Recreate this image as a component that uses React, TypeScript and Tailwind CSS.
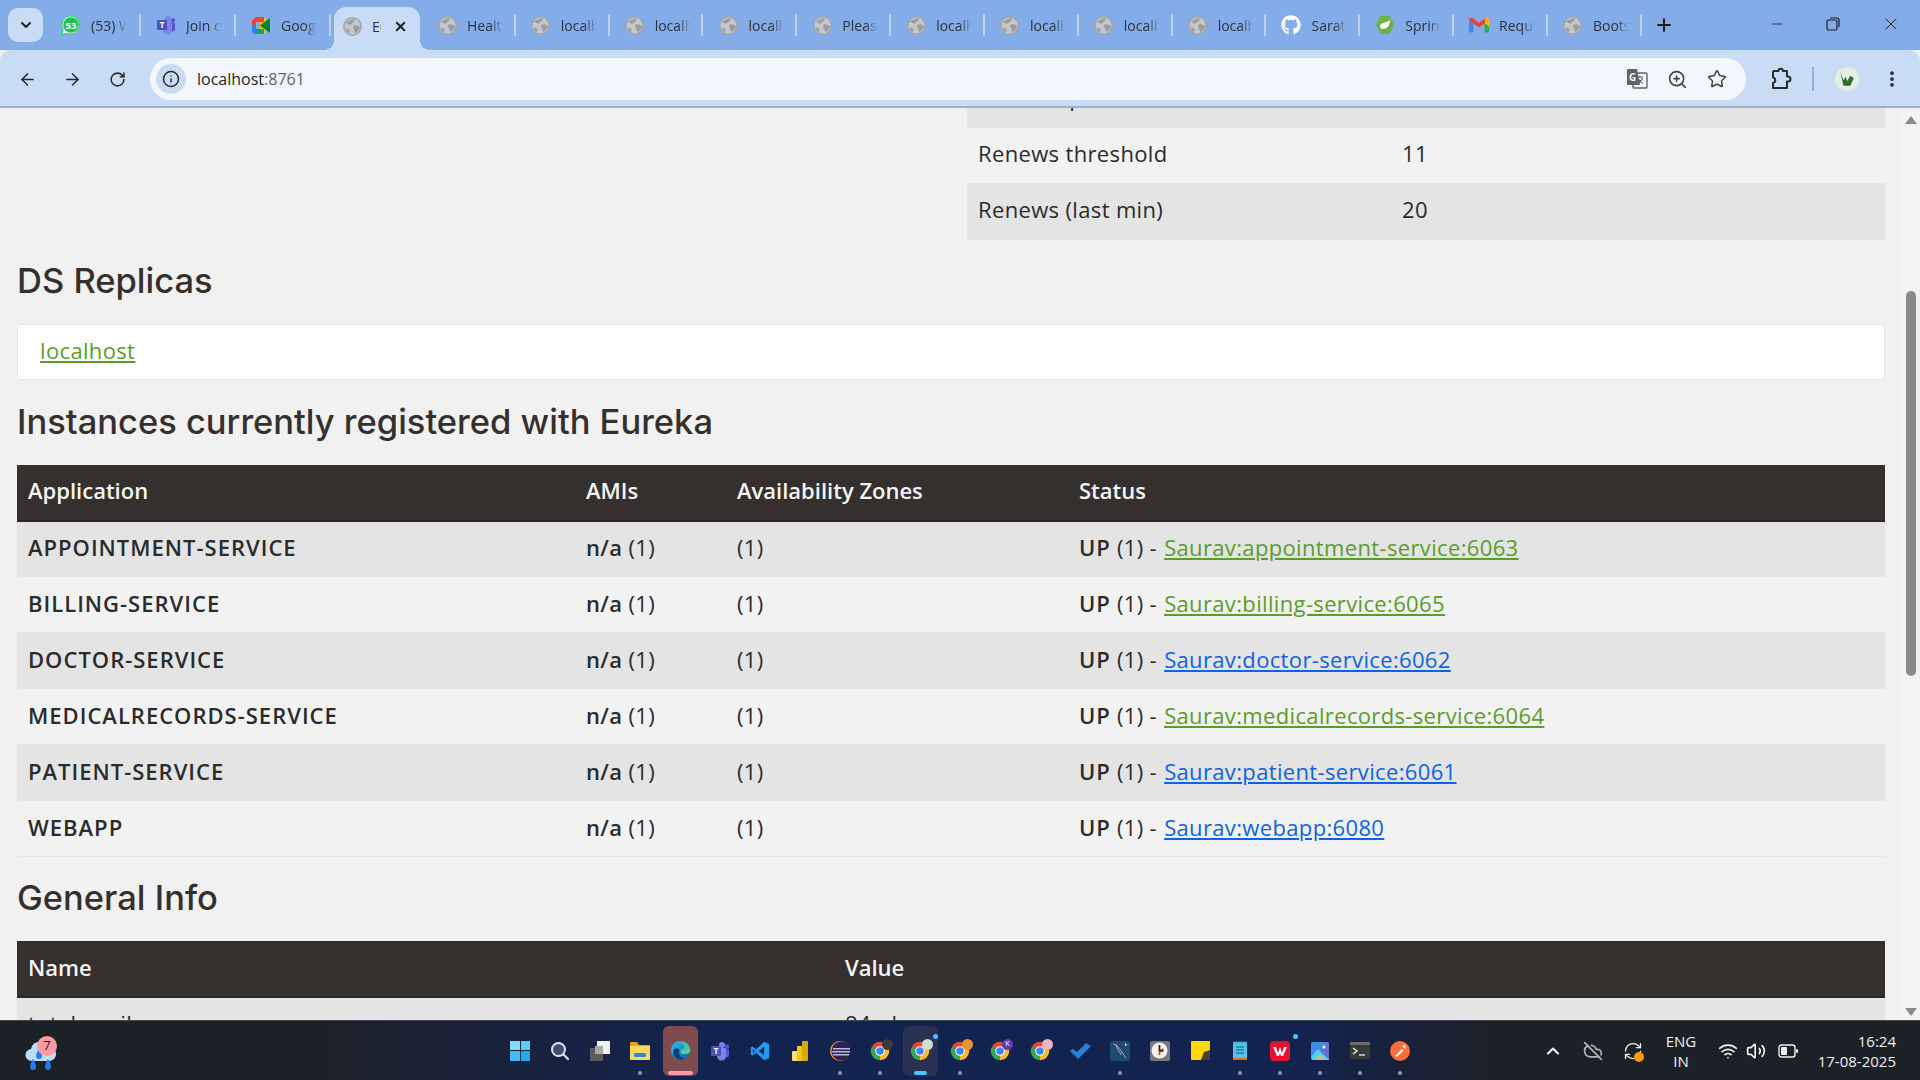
import { ReactNode } from "react"
import {
  ArrowLeft,
  ArrowRight,
  RotateCw,
  Info,
  Star,
  ZoomIn,
  EllipsisVertical,
  Plus,
  X,
  Minus,
  ChevronDown,
  ChevronUp,
  Wifi,
  Volume2,
  RefreshCw,
  CloudOff,
} from "lucide-react"
import { FaGithub } from "react-icons/fa"

function Globe() {
  return (
    <svg width="19" height="19" viewBox="0 0 20 20">
      <circle cx="10" cy="10" r="9.2" fill="#c4c7cb" stroke="#a2a4a8" strokeWidth="1.6" />
      <path d="M3 6c3-2 5-3 9-4 1 2-1 4-3 5-1 2-3 1-6-1zM11 9c3-1 5 0 7 2-1 3-3 5-5 6-1-3-3-5-2-8zM3 12c2 0 4 1 4 3l-1 2c-2-1-3-3-3-5z" fill="#9b9da1" />
    </svg>
  )
}

function WhatsApp() {
  return (
    <svg width="20" height="21" viewBox="0 0 20 21">
      <path d="M10 1a9 9 0 0 0-7.7 13.7L1 19.5l5-1.3A9 9 0 1 0 10 1z" fill="#fff" stroke="#25d366" strokeWidth="1" />
      <circle cx="10" cy="10" r="7.8" fill="#22c05a" />
      <text x="10" y="13.5" textAnchor="middle" fontSize="9.5" fontWeight="700" fill="#fff" fontFamily="Open Sans, sans-serif">53</text>
    </svg>
  )
}

function Teams({ size = 20 }: { size?: number }) {
  return (
    <svg width={size} height={size} viewBox="0 0 20 20">
      <circle cx="12" cy="4" r="3" fill="#7b83eb" />
      <circle cx="17" cy="5.5" r="2.2" fill="#5059c9" />
      <path d="M14 8h5v6a2.5 2.5 0 0 1-5 0z" fill="#5059c9" />
      <path d="M7 7h9v8a4.5 4.5 0 0 1-9 0z" fill="#7b83eb" />
      <rect x="1" y="5" width="10" height="10" rx="1.2" fill="#4b53bc" />
      <text x="6" y="13" textAnchor="middle" fontSize="8" fontWeight="700" fill="#fff" fontFamily="Open Sans, sans-serif">T</text>
    </svg>
  )
}

function Meet() {
  return (
    <svg width="19" height="17" viewBox="0 0 19 17">
      <path d="M4 0h8v5H4v3H0V4z" fill="#ea4335" />
      <path d="M0 8h4v4h8v5H3a3 3 0 0 1-3-3z" fill="#2684fc" />
      <path d="M4 0v8H0V4z" fill="#ea4335" />
      <path d="M12 0a2 2 0 0 1 2 2v13a2 2 0 0 1-2 2V12H8V5h4z" fill="#ffba00" />
      <path d="M8 8.5 14 4l4-3v15l-4-3z" fill="#00832d" />
      <path d="M4 12h8v5H4z" fill="#0ca678" />
    </svg>
  )
}

function Spring() {
  return (
    <svg width="20" height="20" viewBox="0 0 20 20">
      <path d="M5.5 1h9L19 10l-4.5 9h-9L1 10z" fill="#6db33f" />
      <path d="M15 5c0 6-3 9-8 9-1 0-2-1-2-3 1-4 6-3 10-6z" fill="#fff" />
    </svg>
  )
}

function Gmail() {
  return (
    <svg width="20" height="16" viewBox="0 0 20 16">
      <path d="M0 3v11a1.5 1.5 0 0 0 1.5 1.5H4.500V6z" fill="#4285f4" />
      <path d="M20 3v11a1.500 1.500 0 0 1-1.500 1.500H15.500V6z" fill="#34a853" />
      <path d="M15.500 1.500v4.800L20 9V3c0-2-2.200-2.800-3.500-2z" fill="#fbbc04" />
      <path d="M0 3c0-2 2.200-2.800 3.500-2l6.500 5 6-4.700v5L10 10.500 0 3z" fill="#ea4335" />
    </svg>
  )
}

function Translate() {
  return (
    <svg width="22" height="22" viewBox="0 0 22 22">
      <rect x="7" y="5" width="14" height="15" rx="1" fill="#f3f7fd" stroke="#5f6368" strokeWidth="1.400" />
      <path d="M11 9h6M14 8v2M12 15c2-1 4-3 4.500-5M12.500 11c1 2 3 4 4.500 4.500" stroke="#5f6368" strokeWidth="1.100" fill="none" />
      <path d="M2 1h9l3 16H2a1 1 0 0 1-1-1V2a1 1 0 0 1 1-1z" fill="#5f6368" />
      <text x="6.500" y="12.500" textAnchor="middle" fontSize="10" fontWeight="700" fill="#f3f7fd" fontFamily="Open Sans, sans-serif">G</text>
    </svg>
  )
}

function Extension() {
  return (
    <svg className="ml-[24px]" width="22" height="24" viewBox="0 0 22 24" fill="none" stroke="#2b2b2b" strokeWidth="2" strokeLinejoin="round">
      <path d="M4 4h4.500a2.200 2.200 0 0 1 4.400 0H17v5.500h1a2.500 2.500 0 0 1 0 5h-1V21H3v-5a2.800 2.800 0 0 0 0-5.500V5a1 1 0 0 1 1-1z" />
    </svg>
  )
}

function Chrome({ badge }: { badge?: ReactNode }) {
  return (
    <div className="relative h-5 w-5">
      <svg width="20" height="20" viewBox="0 0 24 24">
        <path d="M12 12 2.470 6.500A11 11 0 0 1 21.530 6.500z" fill="#e8453c" />
        <path d="M12 12 21.530 6.500A11 11 0 0 1 12 23z" fill="#f9bb2d" />
        <path d="M12 12V23A11 11 0 0 1 2.470 6.500z" fill="#34a853" />
        <circle cx="12" cy="12" r="5.800" fill="#fff" />
        <circle cx="12" cy="12" r="4.500" fill="#4285f4" />
      </svg>
      {badge}
    </div>
  )
}

function Badge({ className, children }: { className: string; children?: ReactNode }) {
  return (
    <span className={`absolute -top-[2px] -right-[3px] flex h-[11px] w-[11px] items-center justify-center rounded-full text-[7px] text-white ${className}`}>
      {children}
    </span>
  )
}

function Edge() {
  return (
    <svg width="21" height="21" viewBox="0 0 24 24">
      <defs>
        <linearGradient id="edgeA" x1="0" y1="0" x2="1" y2="1">
          <stop offset="0" stopColor="#35c1f1" />
          <stop offset="1" stopColor="#0c59a4" />
        </linearGradient>
        <linearGradient id="edgeB" x1="0" y1="0" x2="1" y2="1">
          <stop offset="0" stopColor="#1b9de2" />
          <stop offset="1" stopColor="#5ee07c" />
        </linearGradient>
      </defs>
      <circle cx="12" cy="12" r="11" fill="url(#edgeA)" />
      <path d="M3 6c4-7 17-7 20 4 1 4-2 6-6 6-3 0-5-1-5-3 0-3 5-2 4-6-1-3-9-5-13-1z" fill="url(#edgeB)" />
      <path d="M11 12c-2 4 1 9 6 9-7 4-15-2-13-9 1-3 5-4 7 0z" fill="#0a3f78" />
    </svg>
  )
}

function VsCode() {
  return (
    <svg width="20" height="20" viewBox="0 0 24 24">
      <path d="M17 1 7.500 10 3 6.500 1 7.500v9L3 17.500 7.500 14 17 23l6-2.500v-17z" fill="#1f9cf0" />
      <path d="M17 7 10.500 12 17 17z" fill="#0e1e4b" />
      <path d="M3.500 9.500 6 12l-2.500 2.500z" fill="#0e1e4b" />
    </svg>
  )
}

function PowerBi() {
  return (
    <svg width="16" height="20" viewBox="0 0 16 20">
      <rect x="0" y="10" width="6" height="10" rx="1" fill="#f2e07a" />
      <rect x="5" y="5" width="6" height="15" rx="1" fill="#f2c811" />
      <rect x="10" y="0" width="6" height="20" rx="1" fill="#d9a80f" />
    </svg>
  )
}

function Eclipse() {
  return (
    <svg width="20" height="20" viewBox="0 0 20 20">
      <circle cx="10" cy="10" r="10" fill="#f7941e" />
      <circle cx="11" cy="10" r="9.500" fill="#2c2255" />
      <rect x="3" y="7" width="17" height="1.500" fill="#bdb8e0" />
      <rect x="2" y="10" width="18" height="1.500" fill="#bdb8e0" />
      <rect x="3" y="13" width="16" height="1.500" fill="#bdb8e0" />
    </svg>
  )
}

function Check() {
  return (
    <svg width="21" height="16" viewBox="0 0 21 16">
      <path d="M0 8l3-2 4 3 9-9 5 3L8 16z" fill="#2a7fd8" />
    </svg>
  )
}

function Workbench() {
  return (
    <svg width="20" height="20" viewBox="0 0 20 20">
      <rect width="20" height="20" rx="2" fill="#1f4a6d" />
      <path d="M3 3c5 1 8 7 13 14M6 3c0 5 4 7 5 11" stroke="#9fb8cc" strokeWidth="1" fill="none" />
      <path d="M15 2l2 2-2 1z" fill="#fff" />
    </svg>
  )
}

function Clock() {
  return (
    <svg width="20" height="20" viewBox="0 0 20 20">
      <rect width="20" height="20" rx="2" fill="#77797d" />
      <circle cx="9.500" cy="9.500" r="8" fill="#f2f2f2" />
      <path d="M9.500 10V5M9.500 10l4-2M9.500 10v4" stroke="#d83b01" strokeWidth="1.600" />
      <path d="M9.500 10V4M9.500 10l4 0" stroke="#222" strokeWidth="1.400" />
    </svg>
  )
}

function Sticky() {
  return (
    <svg width="19" height="19" viewBox="0 0 19 19">
      <path d="M0 1a1 1 0 0 1 1-1h17a1 1 0 0 1 1 1v9l-9 9H1a1 1 0 0 1-1-1z" fill="#ffd800" />
      <path d="M19 9v9a1 1 0 0 1-1 1h-8l3-8z" fill="#4a4130" />
    </svg>
  )
}

function Notepad() {
  return (
    <svg width="14" height="19" viewBox="0 0 14 19">
      <rect y="1" width="14" height="18" rx="1" fill="#4fc3e8" />
      <rect y="17" width="14" height="2" fill="#e2711d" />
      <path d="M3 6h8M3 9h8M3 12h8" stroke="#0d5c7d" strokeWidth="1" />
      <path d="M1 0v2M3.500 0v2M6 0v2M8.500 0v2M11 0v2M13 0v2" stroke="#2a94b8" strokeWidth="1" />
    </svg>
  )
}

function Wps() {
  return (
    <svg width="20" height="20" viewBox="0 0 20 20">
      <rect width="20" height="20" rx="4" fill="#e8102a" />
      <path d="M3 6h3l2 6 2-6 2 6 2-6h3l-4 9h-2l-1-3-1 3H7z" fill="#fff" />
    </svg>
  )
}

function Photos() {
  return (
    <svg width="18" height="18" viewBox="0 0 18 18">
      <defs>
        <linearGradient id="photosBg" x1="0" y1="0" x2="1" y2="1">
          <stop offset="0" stopColor="#2f9bf0" />
          <stop offset="1" stopColor="#7a5fc9" />
        </linearGradient>
      </defs>
      <rect width="18" height="18" rx="2" fill="url(#photosBg)" />
      <circle cx="13" cy="5" r="1.500" fill="#fff" />
      <path d="M0 15l7-8 6 6 5 4v1H1z" fill="#46d6f5" />
      <path d="M4 18l5-6 6 6z" fill="#f5b55e" opacity=".75" />
    </svg>
  )
}

function Terminal() {
  return (
    <svg width="20" height="17" viewBox="0 0 20 17">
      <rect width="20" height="17" rx="1" fill="#3a3a3a" />
      <rect width="20" height="3" fill="#6d6d6d" />
      <path d="M3 6l4 3-4 3" stroke="#eee" strokeWidth="1.300" fill="none" />
      <path d="M9 13h6" stroke="#eee" strokeWidth="1.300" />
    </svg>
  )
}

function Postman() {
  return (
    <svg width="20" height="20" viewBox="0 0 20 20">
      <circle cx="10" cy="10" r="10" fill="#ff6c37" />
      <path d="M5 15l7-7 1.500 1.500-6.500 6.500zM12 5l3 3 1-3-2-1z" fill="#fff" />
    </svg>
  )
}

function Weather() {
  return (
    <div className="relative h-[44px] w-[44px]">
      <svg className="absolute left-[6px] top-[10px]" width="32" height="34" viewBox="0 0 32 34">
        <path d="M7 22a6 6 0 0 1-1-12 9 9 0 0 1 17-2 7 7 0 0 1 2 14z" fill="#bcdcf8" />
        <path d="M8 20c2 3 3 6 3 8a3 3 0 0 1-6 0c0-2 1-5 3-8zM23 20c2 3 3 6 3 8a3 3 0 0 1-6 0c0-2 1-5 3-8zM14 10c2 3 3 5 3 7a3 3 0 0 1-6 0c0-2 1-4 3-7z" fill="#1f7df2" />
      </svg>
      <span className="absolute left-[18px] top-[7px] flex h-[20px] w-[20px] items-center justify-center rounded-full bg-[#ff9aa2] text-[13px] text-[#1b1b1b]">7</span>
    </div>
  )
}

type TabItem = { label: string; icon?: ReactNode; wide?: boolean }

const leftTabs: TabItem[] = [
  { label: "(53) WhatsApp", icon: <WhatsApp />, wide: true },
  { label: "Join conversation", icon: <Teams />, wide: true },
  { label: "Google Meet", icon: <Meet />, wide: true },
]

const rightTabs: TabItem[] = [
  { label: "Health" },
  { label: "localhost" },
  { label: "localhost" },
  { label: "localhost" },
  { label: "Please" },
  { label: "localhost" },
  { label: "localhost" },
  { label: "localhost" },
  { label: "localhost" },
  { label: "Sarath", icon: <FaGithub size={20} className="text-white" /> },
  { label: "Spring", icon: <Spring /> },
  { label: "Request", icon: <Gmail /> },
  { label: "Bootstrap" },
]

function Tab({ label, icon, wide }: TabItem) {
  return (
    <div className={`flex h-full shrink-0 items-center ${wide ? "w-[95px]" : "w-[93.83px]"}`}>
      <div className="flex w-[45px] shrink-0 justify-center pl-[5px]">{icon ?? <Globe />}</div>
      <span className="w-[36px] overflow-hidden whitespace-nowrap text-[14px] text-[#2b3240] [mask-image:linear-gradient(to_right,black_65%,transparent)]">
        {label}
      </span>
      <span className="ml-auto h-[22px] w-[2px] rounded-sm bg-[#c0d3f2]" />
    </div>
  )
}

function ActiveTab() {
  return (
    <div className="relative ml-[3px] mt-[7px] flex h-[43px] w-[86px] shrink-0 items-center rounded-t-[12px] bg-[#c9dcf6] pb-[5px]">
      <span className="absolute bottom-0 -left-[10px] h-[10px] w-[10px] bg-[radial-gradient(circle_at_0_0,transparent_10px,#c9dcf6_10px)]" />
      <span className="absolute bottom-0 -right-[10px] h-[10px] w-[10px] bg-[radial-gradient(circle_at_100%_0,transparent_10px,#c9dcf6_10px)]" />
      <div className="ml-[9px]">
        <Globe />
      </div>
      <span className="ml-[10px] w-[9px] overflow-hidden text-[14px] text-[#2b3240]">Eureka</span>
      <X size={15} strokeWidth={3} className="ml-[12px] text-[#1f1f1f]" />
    </div>
  )
}

function TabStrip() {
  return (
    <div className="flex h-[50px] items-start bg-[#83ace8]">
      <div className="ml-[8px] mt-[8px] flex h-[34px] w-[35px] items-center justify-center rounded-[10px] bg-[#c9dcf6]">
        <ChevronDown size={16} strokeWidth={3} className="text-[#1f1f1f]" />
      </div>
      <div className="ml-[3px] mt-[13px] flex h-[24px] items-center">
        {leftTabs.map((t, i) => (
          <Tab key={i} {...t} />
        ))}
      </div>
      <ActiveTab />
      <div className="ml-[2px] mt-[13px] flex h-[24px] items-center">
        {rightTabs.map((t, i) => (
          <Tab key={i} {...t} />
        ))}
      </div>
      <Plus size={20} strokeWidth={2.500} className="ml-[12px] mt-[15px] text-[#1f1f1f]" />
      <div className="ml-auto mt-[14px] flex items-center gap-[40px] pr-[19px] text-[#1f1f1f]">
        <Minus size={16} strokeWidth={1.300} />
        <svg width="16" height="16" viewBox="0 0 16 16" fill="none" stroke="#1f1f1f" strokeWidth="1.200">
          <rect x="2" y="4" width="10" height="10" rx="1.500" />
          <path d="M5 2h7a2 2 0 0 1 2 2v7" />
        </svg>
        <X size={20} strokeWidth={1.200} />
      </div>
    </div>
  )
}

function Toolbar() {
  return (
    <div className="flex h-[58px] items-center rounded-t-[10px] border-b-2 border-[#a0afcc] bg-[#c9dcf6] pt-[2px] text-[#2b2b2b]">
      <div className="flex w-[150px] shrink-0 items-center pl-[18px]">
        <ArrowLeft size={19} strokeWidth={2} />
        <ArrowRight size={19} strokeWidth={2} className="ml-[26px]" />
        <RotateCw size={17} strokeWidth={2.200} className="ml-[27px]" />
      </div>
      <div className="flex h-[42px] w-[1596px] shrink-0 items-center rounded-full bg-[#f3f7fd] pl-[6px] pr-[19px]">
        <div className="flex h-[30px] w-[30px] items-center justify-center rounded-full bg-[#c9dcf6]">
          <Info size={18} strokeWidth={2} />
        </div>
        <span className="ml-[11px] text-[16px] text-[#1f1f1f]">
          localhost<span className="text-[#5f6368]">:8761</span>
        </span>
        <div className="ml-auto flex items-center gap-[19px] text-[#444]">
          <Translate />
          <ZoomIn size={21} strokeWidth={1.800} />
          <Star size={20} strokeWidth={1.800} />
        </div>
      </div>
      <Extension />
      <span className="ml-[20px] h-[24px] w-[2px] bg-[#8ab0e8]" />
      <div className="ml-[21px] flex h-[24px] w-[24px] items-center justify-center overflow-hidden rounded-full bg-[#e7ede4]">
        <svg width="18" height="18" viewBox="0 0 16 16">
          <path d="M2 2l3 7 2-3 1 4 3-5 3 2-3 7H5z" fill="#2f6b2a" />
        </svg>
      </div>
      <EllipsisVertical size={20} strokeWidth={2.500} className="ml-[23px]" />
    </div>
  )
}

const thClass = "h-[56px] border-b-2 border-[#2b2826] px-[11px] pb-[3px] text-left text-[22px] font-semibold text-[#f4f4f4]"
const tdClass = "h-[56px] border-b border-[#e6e6e6] px-[11px] pb-[3px] text-[22px] tracking-[0.35px] text-[#2b2b2b]"

function Heading({ children, top }: { children: ReactNode; top: string }) {
  return <h2 className={`${top} mb-[25px] font-['Inter',sans-serif] text-[34.5px] leading-[36px] font-medium text-[#35302d]`}>{children}</h2>
}

const instances = [
  { app: "APPOINTMENT-SERVICE", link: "Saurav:appointment-service:6063", visited: true },
  { app: "BILLING-SERVICE", link: "Saurav:billing-service:6065", visited: true },
  { app: "DOCTOR-SERVICE", link: "Saurav:doctor-service:6062", visited: false },
  { app: "MEDICALRECORDS-SERVICE", link: "Saurav:medicalrecords-service:6064", visited: true },
  { app: "PATIENT-SERVICE", link: "Saurav:patient-service:6061", visited: false },
  { app: "WEBAPP", link: "Saurav:webapp:6080", visited: false },
]

const statusRows = [
  { name: "Lease expiration enabled", value: "true" },
  { name: "Renews threshold", value: "11" },
  { name: "Renews (last min)", value: "20" },
]

function Page() {
  return (
    <div className="min-w-0 flex-1 overflow-hidden pl-[17px] pr-[16px]">
      <div className="-mt-[37px]">
        <div className="ml-auto w-[918px]">
          <table className="w-full table-fixed border-collapse">
            <colgroup>
              <col className="w-[424px]" />
              <col />
            </colgroup>
            <tbody>
              {statusRows.map((r, i) => (
                <tr key={r.name} className={i % 2 === 0 ? "bg-[#e4e4e4]" : "bg-[#f2f2f2]"}>
                  <td className={tdClass}>{r.name}</td>
                  <td className={tdClass}>{r.value}</td>
                </tr>
              ))}
            </tbody>
          </table>
        </div>

        <Heading top="mt-[23px]">DS Replicas</Heading>
        <div className="flex h-[56px] items-center rounded-[4px] border border-[#e3e3e3] bg-white px-[22px] pb-[2px] text-[22px] tracking-[0.35px]">
          <a className="text-[#5a9e28] underline">localhost</a>
        </div>

        <Heading top="mt-[24px]">Instances currently registered with Eureka</Heading>
        <table className="w-full table-fixed border-collapse">
          <colgroup>
            <col className="w-[558px]" />
            <col className="w-[151px]" />
            <col className="w-[342px]" />
            <col />
          </colgroup>
          <thead className="bg-[#35302d]">
            <tr>
              <th className={thClass}>Application</th>
              <th className={thClass}>AMIs</th>
              <th className={thClass}>Availability Zones</th>
              <th className={thClass}>Status</th>
            </tr>
          </thead>
          <tbody>
            {instances.map((r, i) => (
              <tr key={r.app} className={i % 2 === 0 ? "bg-[#e4e4e4]" : "bg-[#f2f2f2]"}>
                <td className={`${tdClass} font-semibold tracking-[1px]`}>{r.app}</td>
                <td className={tdClass}>
                  <b className="font-semibold">n/a</b> (1)
                </td>
                <td className={tdClass}>(1)</td>
                <td className={tdClass}>
                  <b className="font-semibold tracking-[1px]">UP</b> (1) -{" "}
                  <a className={r.visited ? "ml-[1px] text-[#5a9e28] underline" : "ml-[1px] text-[#0d63e6] underline"}>{r.link}</a>
                </td>
              </tr>
            ))}
          </tbody>
        </table>

        <Heading top="mt-[23px]">General Info</Heading>
        <table className="w-full table-fixed border-collapse">
          <colgroup>
            <col className="w-[817px]" />
            <col />
          </colgroup>
          <thead className="bg-[#35302d]">
            <tr>
              <th className={thClass}>Name</th>
              <th className={thClass}>Value</th>
            </tr>
          </thead>
          <tbody>
            <tr className="bg-[#e4e4e4]">
              <td className={tdClass}>total-avail-memory</td>
              <td className={tdClass}>84mb</td>
            </tr>
          </tbody>
        </table>
      </div>
    </div>
  )
}

function Scrollbar() {
  return (
    <div className="flex w-[19px] shrink-0 flex-col items-center bg-[#f3f3f3] pt-[8px] pb-[4px]">
      <div className="h-0 w-0 border-x-[6px] border-b-[8px] border-x-transparent border-b-[#8a8a8a]" />
      <div className="mt-[167px] h-[385px] w-[10px] rounded-full bg-[#8a8a8a]" />
      <div className="mt-auto h-0 w-0 border-x-[6px] border-t-[8px] border-x-transparent border-t-[#8a8a8a]" />
    </div>
  )
}

type Pin = { icon: ReactNode; dot?: boolean; kind?: "edge" | "chrome"; alert?: boolean }

const pins: Pin[] = [
  {
    icon: (
      <div className="grid h-5 w-5 grid-cols-2 gap-[1px]">
        <span className="bg-[#7fdcfb]" />
        <span className="bg-[#5ccdf8]" />
        <span className="bg-[#3dbcf5]" />
        <span className="bg-[#1fa8ee]" />
      </div>
    ),
  },
  {
    icon: (
      <svg width="20" height="20" viewBox="0 0 20 20">
        <circle cx="8.500" cy="8.500" r="6.500" fill="#3f4d78" stroke="#dfe3ea" strokeWidth="2" />
        <path d="M13.500 13.500 18 18" stroke="#dfe3ea" strokeWidth="2.200" strokeLinecap="round" />
      </svg>
    ),
  },
  {
    icon: (
      <svg width="20" height="20" viewBox="0 0 20 20">
        <rect x="0" y="7" width="13" height="13" fill="#5c5c5c" />
        <rect x="7" y="0" width="13" height="13" fill="#f2f2f2" />
        <rect x="5" y="5" width="8" height="8" fill="#a8a8a8" />
      </svg>
    ),
  },
  {
    icon: (
      <svg width="20" height="18" viewBox="0 0 20 18">
        <path d="M0 1a1 1 0 0 1 1-1h6l2 3h10a1 1 0 0 1 1 1v2H0z" fill="#e8a50c" />
        <rect y="4" width="20" height="14" rx="1" fill="#ffd75e" />
        <rect x="4" y="11" width="12" height="4" rx="1" fill="#1f8fe0" />
      </svg>
    ),
    dot: true,
  },
  { icon: <Edge />, kind: "edge" },
  { icon: <Teams /> },
  { icon: <VsCode /> },
  { icon: <PowerBi /> },
  { icon: <Eclipse />, dot: true },
  { icon: <Chrome badge={<Badge className="bg-[#3b3a3a]" />} />, dot: true },
  { icon: <Chrome badge={<Badge className="bg-[#cfe0cf]" />} />, kind: "chrome", alert: true },
  { icon: <Chrome badge={<Badge className="bg-[#e8923a]" />} />, dot: true },
  { icon: <Chrome badge={<Badge className="bg-[#5b3fb0]">K</Badge>} /> },
  { icon: <Chrome badge={<Badge className="bg-[#f0b4c4]" />} /> },
  { icon: <Check /> },
  { icon: <Workbench />, dot: true },
  { icon: <Clock /> },
  { icon: <Sticky /> },
  { icon: <Notepad />, dot: true },
  { icon: <Wps />, dot: true, alert: true },
  { icon: <Photos />, dot: true },
  { icon: <Terminal />, dot: true },
  { icon: <Postman />, dot: true },
]

function TaskbarPin({ icon, dot, kind, alert }: Pin) {
  return (
    <div className="relative flex h-[60px] w-[40px] shrink-0 items-center justify-center">
      {kind === "edge" && <span className="absolute left-[3px] top-[5px] h-[50px] w-[35px] rounded-[6px] bg-[#7f4a50]" />}
      {kind === "chrome" && <span className="absolute left-[3px] top-[5px] h-[50px] w-[35px] rounded-[6px] bg-[#2a3050]" />}
      <div className="relative">{icon}</div>
      {alert && <span className="absolute right-[2px] top-[13px] h-[5px] w-[5px] rounded-full bg-[#4cc2ff]" />}
      {dot && <span className="absolute bottom-[6px] left-[18px] h-[4px] w-[4px] rounded-full bg-[#9a9da3]" />}
      {kind === "edge" && <span className="absolute bottom-[6px] left-[8px] h-[4px] w-[25px] rounded-full bg-[#ff9aa2]" />}
      {kind === "chrome" && <span className="absolute bottom-[6px] left-[14px] h-[4px] w-[13px] rounded-full bg-[#4cc2ff]" />}
    </div>
  )
}

function Taskbar() {
  return (
    <div className="flex h-[60px] items-center border-t border-[#44474e] bg-[linear-gradient(90deg,#1c2027_0%,#1c2027_16%,#13234f_36%,#13234f_68%,#1c2027_78%,#1c2027_100%)] text-white">
      <div className="flex w-[500px] shrink-0 items-center pl-[19px]">
        <Weather />
      </div>
      <div className="flex items-center">
        {pins.map((p, i) => (
          <TaskbarPin key={i} {...p} />
        ))}
      </div>
      <div className="ml-[123px] flex items-center">
        <ChevronUp size={20} strokeWidth={2.500} className="text-[#f0f0f0]" />
        <CloudOff size={20} className="ml-[20px] text-[#b5b5b5]" />
        <div className="relative ml-[20px]">
          <RefreshCw size={20} strokeWidth={1.500} className="text-[#eee]" />
          <span className="absolute -bottom-[1px] -right-[1px] h-[10px] w-[10px] rounded-full bg-[#ff9a0a]" />
        </div>
        <div className="ml-[16px] w-[44px] text-center text-[15px] leading-[20px] text-[#f0f0f0]">
          <div>ENG</div>
          <div>IN</div>
        </div>
        <Wifi size={20} className="ml-[15px] text-[#f0f0f0]" />
        <Volume2 size={20} className="ml-[8px] text-[#f0f0f0]" />
        <svg className="ml-[12px]" width="20" height="14" viewBox="0 0 20 14" fill="none">
          <rect x="1" y="1" width="16" height="12" rx="2.500" stroke="#f0f0f0" strokeWidth="1.400" />
          <rect x="3" y="3" width="6" height="8" rx="1" fill="#f0f0f0" />
          <rect x="18" y="5" width="2" height="4" rx="1" fill="#f0f0f0" />
        </svg>
        <div className="ml-[20px] flex w-[78px] flex-col items-end text-[15px] leading-[20px] text-[#f0f0f0]">
          <div>16:24</div>
          <div className="whitespace-nowrap">17-08-2025</div>
        </div>
      </div>
    </div>
  )
}

export default function App() {
  return (
    <div className="flex h-screen w-[1920px] flex-col overflow-hidden bg-[#f1f1f1] font-['Open_Sans',sans-serif]">
      <TabStrip />
      <Toolbar />
      <div className="flex min-h-0 flex-1">
        <Page />
        <Scrollbar />
      </div>
      <Taskbar />
    </div>
  )
}
